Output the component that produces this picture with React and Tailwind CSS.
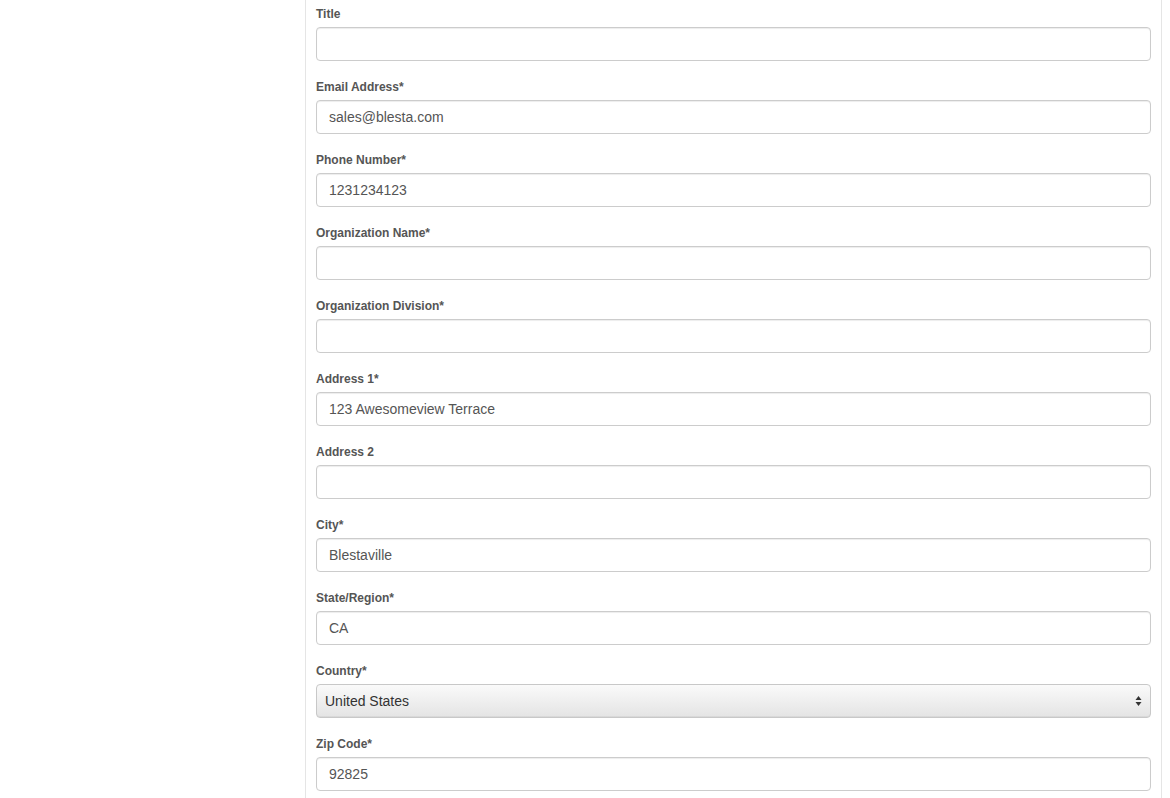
import { useState } from 'react';

const fields = [
  { label: 'Title', value: '' },
  { label: 'Email Address*', value: 'sales@blesta.com' },
  { label: 'Phone Number*', value: '1231234123' },
  { label: 'Organization Name*', value: '' },
  { label: 'Organization Division*', value: '' },
  { label: 'Address 1*', value: '123 Awesomeview Terrace' },
  { label: 'Address 2', value: '' },
  { label: 'City*', value: 'Blestaville' },
  { label: 'State/Region*', value: 'CA' },
  { label: 'Country*', select: true, value: 'United States' },
  { label: 'Zip Code*', value: '92825' },
];

const SelectArrows = () => (
  <svg width="7" height="12" viewBox="0 0 7 12" className="text-[#333]">
    <path d="M3.5 1 L6.5 5 L0.5 5 Z" fill="currentColor" />
    <path d="M3.5 11 L6.5 7 L0.5 7 Z" fill="currentColor" />
  </svg>
);

const App = () => {
  const [values, setValues] = useState(() => fields.map((f) => f.value));

  const update = (index, value) => {
    setValues((prev) => prev.map((v, i) => (i === index ? value : v)));
  };

  return (
    <div className="min-h-[798px] bg-white font-['Liberation_Sans',Arial,sans-serif]">
      <div className="ml-[305px] w-[857px] min-h-[798px] border-x border-[#e5e5e5] px-[10px] pt-[5px]">
        {fields.map((field, index) => (
          <div key={field.label} className="mb-[17px]">
            <label className="mb-[4px] block text-[12px] font-bold leading-[18px] text-[#555]">
              {field.label}
            </label>
            {field.select ? (
              <div className="relative h-[34px] w-[835px]">
                <select
                  value={values[index]}
                  onChange={(e) => update(index, e.target.value)}
                  className="h-[34px] w-full appearance-none rounded-[4px] border border-[#c8c8c8] bg-gradient-to-b from-[#fafafa] to-[#e4e4e4] pl-[8px] text-[14px] text-[#333] shadow-[inset_0_-1px_0_rgba(0,0,0,0.05)] outline-none"
                >
                  <option>United States</option>
                  <option>Canada</option>
                </select>
                <div className="pointer-events-none absolute right-[9px] top-[11px]">
                  <SelectArrows />
                </div>
              </div>
            ) : (
              <input
                type="text"
                value={values[index]}
                onChange={(e) => update(index, e.target.value)}
                className="block h-[34px] w-[835px] rounded-[4px] border border-[#ccc] bg-white px-[12px] text-[14px] text-[#555] shadow-[inset_0_1px_1px_rgba(0,0,0,0.075)] outline-none"
              />
            )}
          </div>
        ))}
      </div>
    </div>
  );
};

export default App;
